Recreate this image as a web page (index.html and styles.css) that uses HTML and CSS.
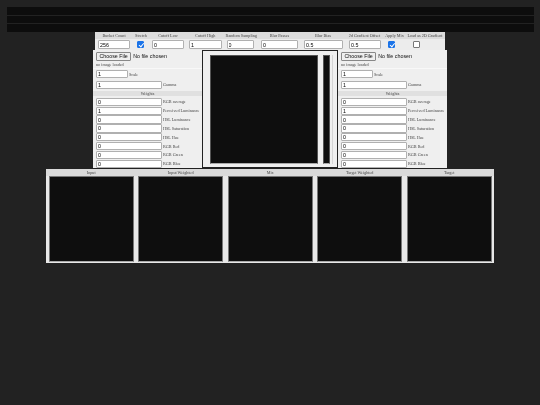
FILE: index.html
```html
<!DOCTYPE html>
<html lang="en">
<head>
<meta charset="utf-8">
<title>Histogram</title>
<link rel="stylesheet" href="styles.css">
</head>
<body>
<div class="bars"><div class="bar"></div><div class="bar"></div><div class="bar"></div></div>
<div class="page">
  <div class="toolbar">
    <div class="tool c-bucket"><span>Bucket Count</span><input class="inp" value="256"></div>
    <div class="tool c-stretch"><span>Stretch</span><i class="check on"></i></div>
    <div class="tool c-low"><span>Cutoff Low</span><input class="inp" value="0"></div>
    <div class="tool c-high"><span>Cutoff High</span><input class="inp" value="1"></div>
    <div class="tool c-random"><span>Random Sampling</span><input class="inp" value="0"></div>
    <div class="tool c-passes"><span>Blur Passes</span><input class="inp" value="0"></div>
    <div class="tool c-bias"><span>Blur Bias</span><input class="inp" value="0.5"></div>
    <div class="tool c-offset"><span>2d Gradient Offset</span><input class="inp" value="0.5"></div>
    <div class="tool c-apply"><span>Apply Mix</span><i class="check on"></i></div>
    <div class="tool c-load"><span>Load as 2D Gradient</span><i class="check"></i></div>
  </div>
  <div class="middle">
    <section class="panel">
      <div class="file"><span class="btn">Choose File</span><span>No file chosen</span></div>
      <div class="status">no image loaded</div>
      <div class="row scale"><input class="inp" value="1"><label>Scale</label></div>
      <div class="row gamma"><input class="inp" value="1"><label>Gamma</label></div>
      <div class="heading">Weights</div>
      <div class="row"><input class="inp" value="0"><label>RGB average</label></div>
      <div class="row"><input class="inp" value="1"><label>Perceived Luminance</label></div>
      <div class="row"><input class="inp" value="0"><label>HSL Luminance</label></div>
      <div class="row"><input class="inp" value="0"><label>HSL Saturation</label></div>
      <div class="row"><input class="inp" value="0"><label>HSL Hue</label></div>
      <div class="row"><input class="inp" value="0"><label>RGB Red</label></div>
      <div class="row"><input class="inp" value="0"><label>RGB Green</label></div>
      <div class="row"><input class="inp" value="0"><label>RGB Blue</label></div>
    </section>
    <section class="center">
      <div class="canvas large"></div>
      <div class="canvas strip"></div>
      <div class="rule"></div>
    </section>
    <section class="panel">
      <div class="file"><span class="btn">Choose File</span><span>No file chosen</span></div>
      <div class="status">no image loaded</div>
      <div class="row scale"><input class="inp" value="1"><label>Scale</label></div>
      <div class="row gamma"><input class="inp" value="1"><label>Gamma</label></div>
      <div class="heading">Weights</div>
      <div class="row"><input class="inp" value="0"><label>RGB average</label></div>
      <div class="row"><input class="inp" value="1"><label>Perceived Luminance</label></div>
      <div class="row"><input class="inp" value="0"><label>HSL Luminance</label></div>
      <div class="row"><input class="inp" value="0"><label>HSL Saturation</label></div>
      <div class="row"><input class="inp" value="0"><label>HSL Hue</label></div>
      <div class="row"><input class="inp" value="0"><label>RGB Red</label></div>
      <div class="row"><input class="inp" value="0"><label>RGB Green</label></div>
      <div class="row"><input class="inp" value="0"><label>RGB Blue</label></div>
    </section>
  </div>
  <div class="gallery">
    <figure class="cell"><figcaption>Input</figcaption><div class="canvas view"></div></figure>
    <figure class="cell"><figcaption>Input Weighted</figcaption><div class="canvas view"></div></figure>
    <figure class="cell"><figcaption>Mix</figcaption><div class="canvas view"></div></figure>
    <figure class="cell"><figcaption>Target Weighted</figcaption><div class="canvas view"></div></figure>
    <figure class="cell"><figcaption>Target</figcaption><div class="canvas view"></div></figure>
  </div>
</div>
</body>
</html>
```
FILE: styles.css
```css
* { box-sizing: border-box; }
html, body { height: 100%; }
body {
  margin: 0;
  background: #222;
  font-family: "Liberation Serif", serif;
  font-size: 4.2px;
  color: #444;
  overflow: hidden;
}
.bars {
  display: flex;
  flex-direction: column;
  gap: 1px;
  padding: 7px 6px 0 7px;
}
.bar { height: 7.5px; background: #0d0d0d; }
.page {
  display: flex;
  flex-direction: column;
  align-items: center;
  margin-top: 0.5px;
  will-change: transform;
}
.toolbar {
  width: 350px;
  height: 18px;
  padding: 2px 3px 0;
  display: flex;
  gap: 5px;
  background: linear-gradient(#dcdcdc 7px, #ececec 7px);
}
.tool {
  display: flex;
  flex-direction: column;
  align-items: flex-start;
  gap: 1.5px;
  line-height: 4.5px;
  white-space: nowrap;
}
.tool > span { align-self: center; }
.c-bucket { width: 32px; }
.c-stretch { width: 12px; }
.c-low { width: 32px; }
.c-high { width: 32.5px; }
.c-random { width: 29.5px; }
.c-passes { width: 37px; }
.c-bias { width: 40px; }
.c-offset { width: 33px; }
.c-apply { width: 17px; }
.c-load { width: 34px; }
.c-random .inp { width: 27.5px; }
.c-bias .inp { width: 39px; margin-left: 1px; }
.c-offset .inp { width: 32px; margin-left: 1px; }
.c-stretch .check { margin-left: 2px; }
.c-apply .check { margin-left: 2px; }
.c-load .check { margin-left: 5px; }
.inp {
  display: block;
  width: 100%;
  height: 9px;
  padding: 0 1px;
  margin: 0;
  background: #fff;
  border: 1px solid #b0b0b0;
  border-radius: 1px;
  font: 5.33px "Liberation Sans", sans-serif;
  color: #000;
  outline: none;
}
.check {
  display: block;
  width: 6.5px;
  height: 6.5px;
  margin-top: 1px;
  background: #fff;
  border: 0.5px solid #777;
  border-radius: 1px;
}
.check.on {
  background: #1a73e8;
  border-color: #1a73e8;
  position: relative;
}
.check.on::after {
  content: "";
  position: absolute;
  left: 1.8px;
  top: 0.2px;
  width: 1.8px;
  height: 3.8px;
  border: solid #fff;
  border-width: 0 1px 1px 0;
  transform: rotate(40deg);
}
.middle { display: flex; height: 119px; }
.panel {
  width: 109px;
  height: 118px;
  background: #efefef;
  padding: 2px 0 0;
}
.file {
  display: flex;
  align-items: center;
  gap: 2px;
  height: 8.5px;
  padding-left: 3px;
  font: 5.33px "Liberation Sans", sans-serif;
  color: #111;
}
.btn {
  display: block;
  height: 8.5px;
  line-height: 6.7px;
  padding: 0 2.4px;
  background: #efefef;
  border: 0.75px solid #888;
  border-radius: 1px;
}
.status {
  height: 8px;
  margin-top: 0.5px;
  padding-left: 3px;
  line-height: 8px;
  border-bottom: 0.5px solid #f8f8f8;
}
.row {
  display: flex;
  align-items: center;
  height: 8.85px;
  padding-left: 3px;
  gap: 1px;
  white-space: nowrap;
}
.row .inp { width: 66px; height: 8.3px; flex: none; }
.row.scale { margin-top: 0.5px; height: 9px; }
.row.scale .inp { width: 32px; height: 8.8px; }
.row.gamma { margin-top: 2px; height: 8.5px; }
.heading {
  height: 5.5px;
  margin: 1.5px 0 1.5px;
  background: #e0e0e0;
  line-height: 5.5px;
  text-align: center;
}
.center {
  display: flex;
  width: 136px;
  height: 118px;
  padding: 4px 0 0 7px;
  background: #efefef;
  border: 1px solid #222;
}
.canvas {
  background: #0e0e0e;
  border: 1px solid #555;
  border-bottom-color: #aaa;
}
.large { width: 108px; height: 109px; flex: none; }
.strip { width: 7px; height: 109px; flex: none; margin-left: 5px; }
.rule { width: 1px; height: 109px; flex: none; margin-left: 2px; background: #d4d4d4; }
.gallery {
  display: flex;
  width: 448px;
  height: 94px;
  padding: 0 2px 0 2.7px;
  gap: 4.5px;
  background: linear-gradient(#dadada 7px, #e8e8e8 7px);
}
.cell {
  margin: 0;
  width: 85px;
  display: flex;
  flex-direction: column;
}
.cell figcaption {
  height: 7.3px;
  line-height: 7px;
  text-align: center;
}
.view { width: 85px; height: 85.5px; border-color: #777; border-bottom-color: #aaa; }
```
